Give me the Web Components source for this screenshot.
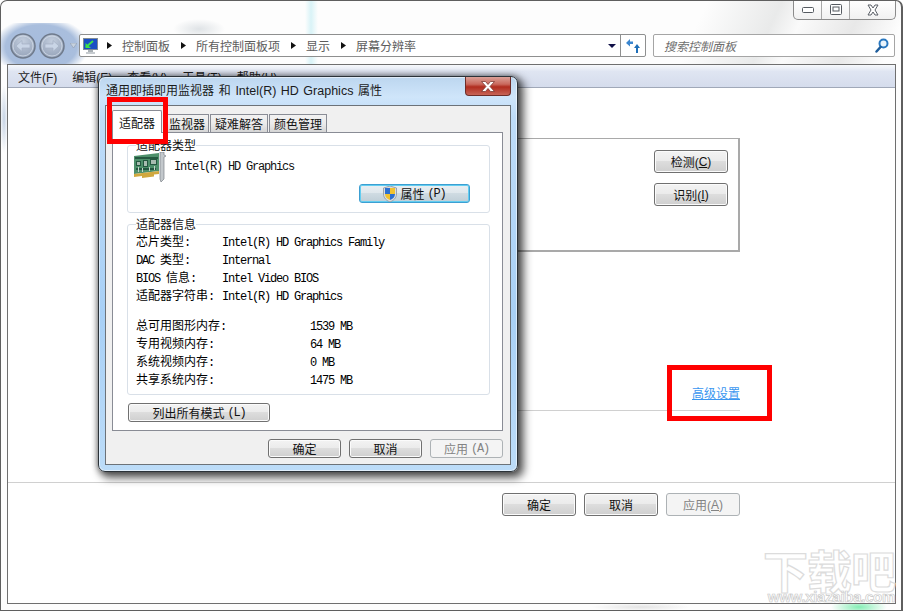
<!DOCTYPE html>
<html lang="zh-CN">
<head>
<meta charset="utf-8">
<title>屏幕分辨率</title>
<style>
  html,body{ margin:0; padding:0; background:#fff; }
  body{ width:903px; height:611px; overflow:hidden; font:12px "Liberation Sans","Noto Sans CJK SC",sans-serif; }
</style>
</head>
<body>

<aero-window>
  <nav-bar></nav-bar>
  <menu-pane>
    <res-content></res-content>
  </menu-pane>
</aero-window>

<props-dialog></props-dialog>

<red-box style="left:107px;top:97px;width:61px;height:47px"></red-box>
<red-box style="left:667px;top:365px;width:105px;height:56px"></red-box>

<script>
(function(){
  const CJK = '"Noto Sans CJK SC",sans-serif';
  const UI  = '"Liberation Sans","Noto Sans CJK SC",sans-serif';

  // 小工具：定义元素，样式和结构都写在 shadow 里
  const def = (name, html, init) => {
    customElements.define(name, class extends HTMLElement {
      constructor(){
        super();
        this.root = this.attachShadow({mode:'open'});
        this.root.innerHTML = typeof html === 'function' ? html(this) : html;
      }
      connectedCallback(){ if (init) init.call(this); }
    });
  };

  // 半角字符走等宽（模拟宋体点阵）
  const monoize = s => s.replace(/[\x20-\x7e]+/g, m => `<mono-text>${m}</mono-text>`);

  def('mono-text', `<style>
    :host{ display:inline; font:12px/1 "Liberation Mono",monospace; letter-spacing:-1.2px; white-space:pre; }
    :host(.acc){ margin-left:3px; }
  </style><slot></slot>`);

  def('win-button', `<style>
    :host{ display:inline-flex; box-sizing:border-box; width:74px; height:23px; align-items:center; justify-content:center;
      border:1px solid #707070; border-radius:3px; color:#111; font:12px ${UI};
      background:linear-gradient(#f3f3f3,#ebebeb 47%,#dddddd 50%,#cfcfcf);
      box-shadow:inset 0 0 0 1px #fbfbfb; white-space:pre; }
    :host([disabled]){ border-color:#adb2b5; background:#f4f4f4; color:#838383; box-shadow:none; }
    :host([glow]){ border-color:#3c9fd2; box-shadow:inset 0 0 0 1px #63cdf0;
      background:linear-gradient(#e9eff3,#dfe7ec 47%,#cfdbe2 50%,#bfced7); }
  </style><slot></slot>`);

  def('red-box', `<style>
    :host{ display:block; position:absolute; box-sizing:border-box; border:5px solid #ff0000; z-index:5; }
  </style>`);

  def('water-mark', `<style>
    :host{ position:absolute; right:0; bottom:0; display:flex; flex-direction:column; align-items:flex-end; color:#fff; z-index:1; }
    .big{ font:700 45px/42px ${CJK}; letter-spacing:-1px; -webkit-text-stroke:1.2px #dcdcdc; white-space:nowrap; }
    .url{ font:700 15px/12px "Liberation Sans",sans-serif; letter-spacing:-.3px; -webkit-text-stroke:.7px #c9c9c9; white-space:nowrap; }
  </style>
  <span class="big">下载吧</span><span class="url">www.xiazaiba.com</span>`);

  // 外层窗口
  def('aero-window', `<style>
    :host{ display:flex; flex-direction:column; box-sizing:border-box; width:903px; height:611px; position:relative;
      border:1px solid #5f5f5f; border-width:1px 2px 1px 1px; border-radius:7px 7px 0 0; overflow:hidden;
      background:
        radial-gradient(ellipse 48px 30px at 40px 24px,#a6bcdd 0,#a9bedd 74%,transparent 100%) 0 22px/86px 42px no-repeat,
        linear-gradient(90deg,transparent 304px,#d9f3f7 310px,transparent 317px) 0 0/100% 64px no-repeat,
        radial-gradient(ellipse 26px 10px at 198px 28px,#dfe3e6,transparent),
        linear-gradient(115deg,transparent 76%,#e9eaea 84%,#fafafa 87%,#e8e8e8 93%,transparent 98%) 0 0/100% 64px no-repeat,
        radial-gradient(ellipse 28px 8px at 858px 606px,#84eeb4,transparent),
        radial-gradient(ellipse 50px 4px at 640px 606px,#e3e3e3,transparent),
        radial-gradient(ellipse 4px 34px at 3px 118px,#c6d3e4,transparent),
        #fdfdfd; }
    .caption{ display:flex; justify-content:flex-end; padding-right:5px; height:19px; flex:none; }
    .btns{ display:flex; width:103px; margin-top:-1px; box-sizing:border-box; height:20px; border:1px solid #8b8b8b; border-top:0; border-radius:0 0 5px 5px;
      background:linear-gradient(#ffffff,#f1f1f1); }
    .btns span{ display:flex; align-items:center; justify-content:center; border-right:1px solid #a8a8a8; width:27px; }
    .btns span:last-child{ flex:1; border:0; }
    .body{ display:flex; flex-direction:column; flex:1; min-height:0; padding:14px 5px 6px 6px; gap:7px; }
    svg{ display:block; }
  </style>
  <div class="caption"><div class="btns">
    <span><svg width="12" height="6"><rect x=".5" y=".5" width="11" height="5" rx="1" fill="#fff" stroke="#555a60"/></svg></span>
    <span><svg width="12" height="11"><rect x=".5" y=".5" width="11" height="10" rx="1" fill="#fff" stroke="#555a60"/><rect x="3" y="3" width="6" height="4" fill="none" stroke="#555a60"/></svg></span>
    <span><svg width="14" height="12"><path d="M2 1h3l2 3 2-3h3L9 6l3 5H9L7 8l-2 3H2l3-5z" fill="#fff" stroke="#5a5f66"/></svg></span>
  </div></div>
  <div class="body"><slot></slot></div>`);

  // 导航栏
  const navBtn = d => `<svg width="26" height="26" viewBox="0 0 26 26">
    <defs><radialGradient id="g${d}" cx=".5" cy=".3" r=".8"><stop offset="0" stop-color="#c3cede"/><stop offset="1" stop-color="#8e9cb3"/></radialGradient></defs>
    <circle cx="13" cy="13" r="12" fill="url(#g${d})" stroke="#6f7a8b" stroke-width="1.500"/>
    <circle cx="13" cy="13" r="10" fill="none" stroke="#d5dde8" stroke-opacity=".75"/>
    <path d="${d==='l'?'M6 13 12 7.500v3.500h8v4h-8v3.500z':'M20 13 14 7.500v3.500H6v4h8v3.500z'}" fill="#c9d5e6" stroke="#a3b0c3" stroke-width=".7"/></svg>`;
  const crumb = t => `<svg class="ar" width="5" height="7"><path d="M0 0l5 3.500L0 7z" fill="#111"/></svg><span>${t}</span>`;

  def('nav-bar', `<style>
    :host{ display:flex; height:23px; flex:none; font:12px ${CJK}; color:#5c5c5c; align-items:stretch; }
    svg{ display:block; flex:none; }
    .round{ display:flex; align-items:center; width:72px; padding-left:3px; box-sizing:border-box; flex:none; }
    .round svg+svg{ margin-left:3px; }
    .round .dd{ margin-left:5px; }
    .addr{ display:flex; align-items:center; box-sizing:border-box; width:567px; border:1px solid #8e8f8f; border-radius:2px; background:#fff; padding-left:3px; }
    .addr .ar{ margin:0 10px 0 10px; }
    .addr .ar:first-of-type{ margin-left:9px; }
    .addr .ar~.ar{ margin-left:11px; }
    .addr .mon{ margin-right:-1px; }
    .addr span{ line-height:20px; white-space:nowrap; }
    .fill{ flex:1; }
    .drop{ width:16px; display:flex; justify-content:center; align-items:center; }
    .ref{ width:24px; height:100%; border-left:1px solid #8e8f8f; display:flex; align-items:center; justify-content:center; }
    .search{ display:flex; align-items:center; justify-content:space-between; box-sizing:border-box; width:242px; margin-left:7px; border:1px solid #a5a5a5; border-radius:2px; background:#fff; padding:0 5px 0 10px; color:#6e6e6e; font-style:italic; }
  </style>
  <div class="round">${navBtn('l')}${navBtn('r')}<svg class="dd" width="7" height="5"><path d="M0 0h7L3.500 5z" fill="#c7d2df" stroke="#8f9caf" stroke-width=".6"/></svg></div>
  <div class="addr">
    <svg class="mon" width="15" height="16" viewBox="0 0 15 16"><rect x=".5" y=".5" width="14" height="11" fill="#1a4fc4" stroke="#7f8c96"/><path d="M3 9l7-6" stroke="#3ee04a" stroke-width="2"/><path d="M2.500 5v5H8z" fill="#3ee04a"/><rect x="5" y="12" width="5" height="2" fill="#a9b0b5"/><rect x="3" y="14" width="9" height="2" fill="#c6cbcf"/></svg>
    ${crumb('控制面板')}${crumb('所有控制面板项')}${crumb('显示')}${crumb('屏幕分辨率')}
    <span class="fill"></span>
    <span class="drop"><svg width="8" height="4"><path d="M0 0h8L4 4z" fill="#101048"/></svg></span>
    <span class="ref"><svg width="15" height="14" viewBox="0 0 15 14"><path d="M0 5l4-4v2.500h3V6H4v2.500z" fill="#3b86cf" transform="translate(0 -1)"/><path d="M15 8l-3-4-3 4h2v5h2V8z" fill="#1e6fb8" transform="translate(-1 1)"/></svg></span>
  </div>
  <div class="search"><span>搜索控制面板</span>
    <svg width="14" height="15" viewBox="0 0 14 15"><circle cx="8.500" cy="5.500" r="4" fill="#eaf4fc" stroke="#2a78c0" stroke-width="2"/><path d="M5.500 9 1.500 13.500" stroke="#1f5e9c" stroke-width="2.500" stroke-linecap="round"/></svg>
  </div>`);

  // 内容窗格 + 菜单
  def('menu-pane', `<style>
    :host{ display:flex; flex-direction:column; flex:1; min-height:0; box-sizing:border-box; border:1px solid #6f6f6f; background:#fff; position:relative; }
    .menu{ display:flex; height:23px; flex:none; align-items:center; gap:15px; padding-left:10px; box-sizing:border-box; color:#1e1e1e; font:12px ${UI};
      background:linear-gradient(#f7f9fc,#dfe5f2 30%,#d5dcec); border-bottom:1px solid #a0a8b8; }
  </style>
  <div class="menu"><span>文件(F)</span><span>编辑(E)</span><span>查看(V)</span><span>工具(T)</span><span>帮助(H)</span></div>
  <slot></slot><water-mark></water-mark>`);

  def('res-content', `<style>
    :host{ display:flex; flex-direction:column; flex:1; min-height:0; font:12px ${UI}; color:#111; position:relative; z-index:2; }
    .group{ display:flex; flex-direction:column; align-items:flex-end; gap:10px; box-sizing:border-box; height:114px; margin:50px 155px 0 120px; padding:11px 10px 0 0; border:1px solid #a9a9a9; border-width:1px 2px 2px 1px; }
    .link{ align-self:flex-end; margin:134px 155px 0 0; color:#3a96f0; text-decoration:underline; line-height:17px; }
    hr{ border:0; border-top:1px solid #d0d0d0; margin:0; flex:none; }
    .sep{ margin:7px 155px 0 120px; }
    .foot{ margin-top:71px; }
    .row{ display:flex; justify-content:flex-end; gap:8px; margin:10px 155px 0 0; }
  </style>
  <div class="group">
    <win-button>检测(<u>C</u>)</win-button>
    <win-button>识别(<u>I</u>)</win-button>
  </div>
  <div class="link">高级设置</div>
  <hr class="sep"><hr class="foot">
  <div class="row">
    <win-button>确定</win-button>
    <win-button>取消</win-button>
    <win-button disabled>应用(<u>A</u>)</win-button>
  </div>`);

  // 信息行
  def('info-row', el => `<style>
    :host{ display:flex; height:18px; align-items:center; color:#000; font:12px ${CJK}; white-space:nowrap; }
    .l{ width:var(--label-w,86px); flex:none; }
  </style>
  <span class="l">${monoize(el.getAttribute('label')||'')}</span><span>${monoize(el.getAttribute('value')||'')}</span>`);

  def('group-box', el => `<style>
    :host{ display:block; box-sizing:border-box; border:1px solid #d9e0e8; border-radius:3px; padding:0 8px; position:relative; }
    .t{ display:block; width:max-content; height:13px; margin:-8px 0 0 0; background:#fff; font:12px/13px ${CJK}; color:#111; }
  </style>
  <span class="t">${el.getAttribute('label')||''}</span><slot></slot>`);

  // 属性对话框（桌面上的一个窗口）
  const tab = (t,w) => `<span class="tab" style="width:${w}px">${t}</span>`;

  def('props-dialog', `<style>
    :host{ display:flex; flex-direction:column; position:absolute; left:98px; top:76px; width:420px; height:396px; box-sizing:border-box; z-index:4;
      border:1px solid #2b3238; border-radius:7px; padding:0 6px 6px; font:12px ${CJK}; color:#111;
      background:linear-gradient(#bcd6ef,#cfe5fa 20px,#bedcf8 40px,#a8d0f6 60%,#bcdcf8);
      box-shadow:4px 4px 9px 2px rgba(0,0,0,.62),0 0 6px rgba(0,0,0,.45),inset 0 0 0 1px rgba(255,255,255,.55); }
    .bar{ display:flex; height:28px; flex:none; position:relative; align-items:flex-start; }
    .title{ padding:4px 0 0 1px; color:#1b1b1b; font:12px/18px ${CJK}; word-spacing:2px; white-space:nowrap; }
    .title b{ font:12.500px/18px "Liberation Sans",sans-serif; word-spacing:1px; }
    .close{ position:absolute; right:0; top:0; width:46px; height:19px; box-sizing:border-box; display:flex; align-items:center; justify-content:center;
      border:1px solid #6e2d28; border-top:0; border-radius:0 0 4px 4px;
      background:linear-gradient(#dca198,#c9685c 40%,#b02c1e 55%,#c76457); }
    .frame{ flex:1; min-height:0; display:flex; flex-direction:column; box-sizing:border-box; border:1px solid #6c7278; background:#f0f0f0; padding:7px 7px 0 6px; }
    .tabs{ display:flex; height:19px; flex:none; align-items:flex-end; gap:1px; position:relative; z-index:1; }
    .tab{ display:flex; align-items:center; justify-content:center; box-sizing:border-box; height:18px; border:1px solid #898c95; border-bottom:0;
      background:linear-gradient(#f2f2f2,#ebebeb 50%,#d5d5d5); white-space:nowrap; }
    .tab.on{ height:23px; background:#fff; margin-right:2px; margin-bottom:-1px; position:relative; border-radius:2px 2px 0 0; }
    .page{ flex:none; height:299px; box-sizing:border-box; border:1px solid #898c95; background:#fff; padding:12px 12px 0 14px; }
    .card{ height:68px; }
    .card .main{ display:flex; align-items:flex-start; gap:8px; margin:1px 0 0 -2px; height:32px; }
    .card .name{ line-height:26px; }
    .card .act{ display:flex; justify-content:flex-end; margin:0 11px 0 0; }
    .info{ height:171px; margin-top:11px; }
    .rows{ padding-top:1px; }
    .gap{ height:12px; }
    .mem{ --label-w:174px; }
    .list{ margin:8px 0 0 1px; width:142px; display:flex; }
    .foot{ display:flex; justify-content:flex-end; gap:8px; margin-top:8px; }
    win-button{ height:19px; }
    .foot win-button{ width:73px; }
    svg{ display:block; }
    .act win-button{ width:111px; }
    .shield{ margin-right:3px; }
  </style>
  <div class="bar">
    <span class="title">通用即插即用监视器 和 <b>Intel(R) HD Graphics</b> 属性</span>
    <span class="close"><svg width="16" height="11" viewBox="0 0 16 11"><path d="M1.500.5h4L8 3.500 10.500.5h4L10 5.500l4.500 5h-4L8 7.500l-2.500 3h-4L6 5.500z" fill="#fff" stroke="#7d3a33" stroke-width=".8"/></svg></span>
  </div>
  <div class="frame">
    <div class="tabs">
      <span class="tab on" style="width:50px">适配器</span>${tab('监视器',44)}${tab('疑难解答',58)}${tab('颜色管理',58)}
    </div>
    <div class="page">
      <group-box class="card" label="适配器类型">
        <div class="main">
          <svg width="32" height="31" viewBox="0 0 32 31">
            <path d="M0 4 25 1v18L0 22z" fill="#4d8f6a"/>
            <path d="M1 5h23v2H1zM2 9h5v5H2zM9 8h5v7H9zM16 7h7v6h-7zM2 16h20v2H2z" fill="#24573f"/>
            <path d="M3 10h3v3H3zM10 9h3v5h-3zM17 8h5v4h-5z" fill="#a8bcb0"/>
            <path d="M4 15h1v5H4zM8 16h1v4H8zM15 15h1v4h-1zM20 14h1v4h-1z" fill="#c5d4ca"/>
            <path d="M0 22 25 19v3l-5 .5v2l-12 1.500v-2l-8 1z" fill="#d0a83f"/>
            <path d="M26 0h4v3l2 1-2 1v22l-3 3-1-3z" fill="#c3c8cc" stroke="#7d8388" stroke-width=".7"/>
          </svg>
          <span class="name"><mono-text>Intel(R) HD Graphics</mono-text></span>
        </div>
        <div class="act"><win-button glow>
          <svg class="shield" width="14" height="16" viewBox="0 0 14 16"><path d="M7 0 13.500 2v6c0 4-3 6.500-6.500 8C3.500 14.500.5 12 .5 8V2z" fill="#d8dde2" stroke="#8b939b" stroke-width=".8"/><path d="M7 2H2v6h5z" fill="#2c6fd0"/><path d="M7 2h5v6H7z" fill="#f2c22e"/><path d="M2 8h5v6c-3-1-5-3-5-6z" fill="#f2c22e"/><path d="M7 8h5c0 3-2 5-5 6z" fill="#2c6fd0"/></svg>
          <span>属性</span><mono-text class="acc">(P)</mono-text>
        </win-button></div>
      </group-box>
      <group-box class="info" label="适配器信息">
        <div class="rows">
          <info-row label="芯片类型:" value="Intel(R) HD Graphics Family"></info-row>
          <info-row label="DAC 类型:" value="Internal"></info-row>
          <info-row label="BIOS 信息:" value="Intel Video BIOS"></info-row>
          <info-row label="适配器字符串:" value="Intel(R) HD Graphics"></info-row>
          <div class="gap"></div>
          <info-row class="mem" label="总可用图形内存:" value="1539 MB"></info-row>
          <info-row class="mem" label="专用视频内存:" value="64 MB"></info-row>
          <info-row class="mem" label="系统视频内存:" value="0 MB"></info-row>
          <info-row class="mem" label="共享系统内存:" value="1475 MB"></info-row>
        </div>
      </group-box>
      <win-button class="list">列出所有模式<mono-text class="acc">(L)</mono-text></win-button>
    </div>
    <div class="foot">
      <win-button>确定</win-button>
      <win-button>取消</win-button>
      <win-button disabled>应用<mono-text class="acc">(A)</mono-text></win-button>
    </div>
  </div>`);
})();
</script>
</body>
</html>
